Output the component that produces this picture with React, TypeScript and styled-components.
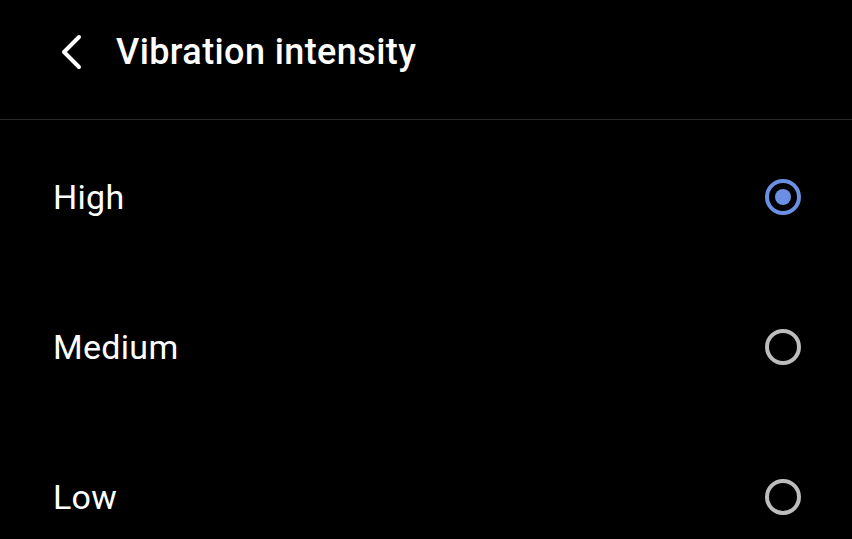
import React, { useState } from 'react';
import styled, { createGlobalStyle } from 'styled-components';

const GlobalStyle = createGlobalStyle`
  html, body {
    margin: 0;
    padding: 0;
    background: #000;
  }

  body {
    font-family: Roboto, 'Noto Sans', sans-serif;
    color: #fff;
    overflow: hidden;
  }
`;

const Screen = styled.div`
  width: 852px;
  height: 539px;
  background: #000;
  overflow: hidden;
`;

const Header = styled.div`
  display: flex;
  align-items: center;
  height: 120px;
  padding-left: 56px;
  padding-bottom: 16px;
  box-sizing: border-box;
  border-bottom: 1px solid #2b2b2b;
`;

const BackButton = styled.button`
  display: flex;
  align-items: center;
  justify-content: center;
  width: 30px;
  height: 40px;
  padding: 0;
  margin-right: 30px;
  border: none;
  background: none;
  cursor: pointer;
`;

const Title = styled.h1`
  margin: 0;
  font-size: 36px;
  font-weight: 500;
  letter-spacing: 0.4px;
`;

const OptionList = styled.div`
  display: flex;
  flex-direction: column;
  padding-top: 2px;
`;

const OptionRow = styled.label`
  display: flex;
  align-items: center;
  justify-content: space-between;
  height: 150px;
  padding: 0 51px 0 53px;
  box-sizing: border-box;
  cursor: pointer;
`;

const OptionLabel = styled.span`
  font-size: 34px;
  font-weight: 400;
  letter-spacing: 0.3px;
`;

interface RadioProps {
  checked?: boolean;
}

const Radio = styled.span<RadioProps>`
  position: relative;
  width: 36px;
  height: 36px;
  border-radius: 50%;
  box-sizing: border-box;
  border: 4px solid ${(props) => (props.checked ? '#6b8fe3' : '#bdbdbd')};

  &::after {
    content: '';
    position: absolute;
    top: 50%;
    left: 50%;
    width: 16px;
    height: 16px;
    margin: -8px 0 0 -8px;
    border-radius: 50%;
    background: #6b8fe3;
    display: ${(props) => (props.checked ? 'block' : 'none')};
  }
`;

const options = ['High', 'Medium', 'Low'];

const App: React.FC = () => {
  const [selected, setSelected] = useState('High');

  return (
    <Screen>
      <GlobalStyle />
      <Header>
        <BackButton aria-label="Back">
          <svg width="22" height="36" viewBox="0 0 22 36" fill="none">
            <path
              d="M19 3 L4 18 L19 33"
              stroke="#fff"
              strokeWidth="4"
              strokeLinecap="round"
              strokeLinejoin="round"
            />
          </svg>
        </BackButton>
        <Title>Vibration intensity</Title>
      </Header>
      <OptionList>
        {options.map((opt) => (
          <OptionRow key={opt} onClick={() => setSelected(opt)}>
            <OptionLabel>{opt}</OptionLabel>
            <Radio checked={selected === opt} />
          </OptionRow>
        ))}
      </OptionList>
    </Screen>
  );
};

export default App;
